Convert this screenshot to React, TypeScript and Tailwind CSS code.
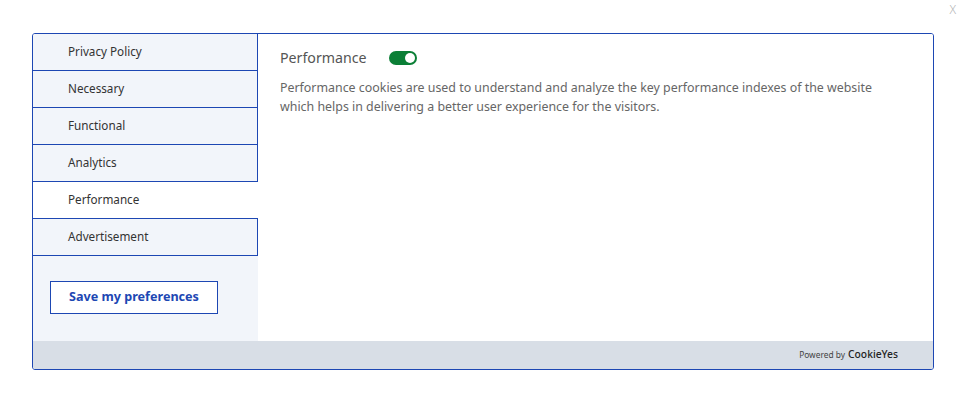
import { useState } from 'react';

const tabs = ['Privacy Policy', 'Necessary', 'Functional', 'Analytics', 'Performance', 'Advertisement'];

export default function App() {
  const [active, setActive] = useState('Performance');
  const [enabled, setEnabled] = useState(true);

  return (
    <div className="relative h-[401px] w-[965px] bg-white font-['Noto_Sans',sans-serif]">
      {/* Close */}
      <button className="absolute right-[9px] top-[4px] text-[12px] font-light leading-none text-[#b4b4b4]">X</button>

      <div className="absolute left-[32px] top-[33px] flex h-[337px] w-[902px] flex-col overflow-hidden rounded-[3px] border border-[#1d47b3]">
        <div className="flex flex-1">
          {/* Sidebar */}
          <div className="flex w-[225px] flex-col bg-[#f2f5fa]">
            {tabs.map((t) => (
              <button
                key={t}
                onClick={() => setActive(t)}
                className={
                  t === active
                    ? 'flex h-[37px] items-center border-b border-[#1d47b3] bg-white pb-[1px] pl-[35px] text-left text-[11.7px] text-[#333]'
                    : 'flex h-[37px] items-center border-b border-r border-[#1d47b3] pb-[1px] pl-[35px] text-left text-[11.7px] text-[#333]'
                }
              >
                {t}
              </button>
            ))}
            <div className="pl-[17px] pt-[25px]">
              <button className="h-[33px] w-[168px] border border-[#1d47b3] bg-white text-[12.6px] font-bold text-[#1d47b3]">
                Save my preferences
              </button>
            </div>
          </div>

          {/* Content */}
          <div className="flex-1 bg-white pl-[22px] pr-[40px] pt-[13px]">
            <div className="flex items-center gap-[22px]">
              <h3 className="text-[14.2px] leading-[22px] text-[#555]">{active}</h3>
              <button
                onClick={() => setEnabled(!enabled)}
                className={
                  enabled
                    ? 'flex h-[14px] w-[28px] items-center justify-end rounded-full bg-[#0b7f36] px-[2px]'
                    : 'flex h-[14px] w-[28px] items-center justify-start rounded-full bg-[#999] px-[2px]'
                }
              >
                <span className="h-[10px] w-[10px] rounded-full bg-white" />
              </button>
            </div>
            <p className="mt-[9px] text-[12.4px] leading-[19px] text-[#666]">
              Performance cookies are used to understand and analyze the key performance indexes of the website which helps in delivering a better user experience for the visitors.
            </p>
          </div>
        </div>

        {/* Footer */}
        <div className="flex h-[28px] items-center justify-end bg-[#d8dee6] pr-[35px]">
          <span className="text-[8.4px] text-[#444]">Powered by</span>
          <span className="ml-[3px] text-[10.3px] font-medium text-[#222]">CookieYes</span>
        </div>
      </div>
    </div>
  );
}
